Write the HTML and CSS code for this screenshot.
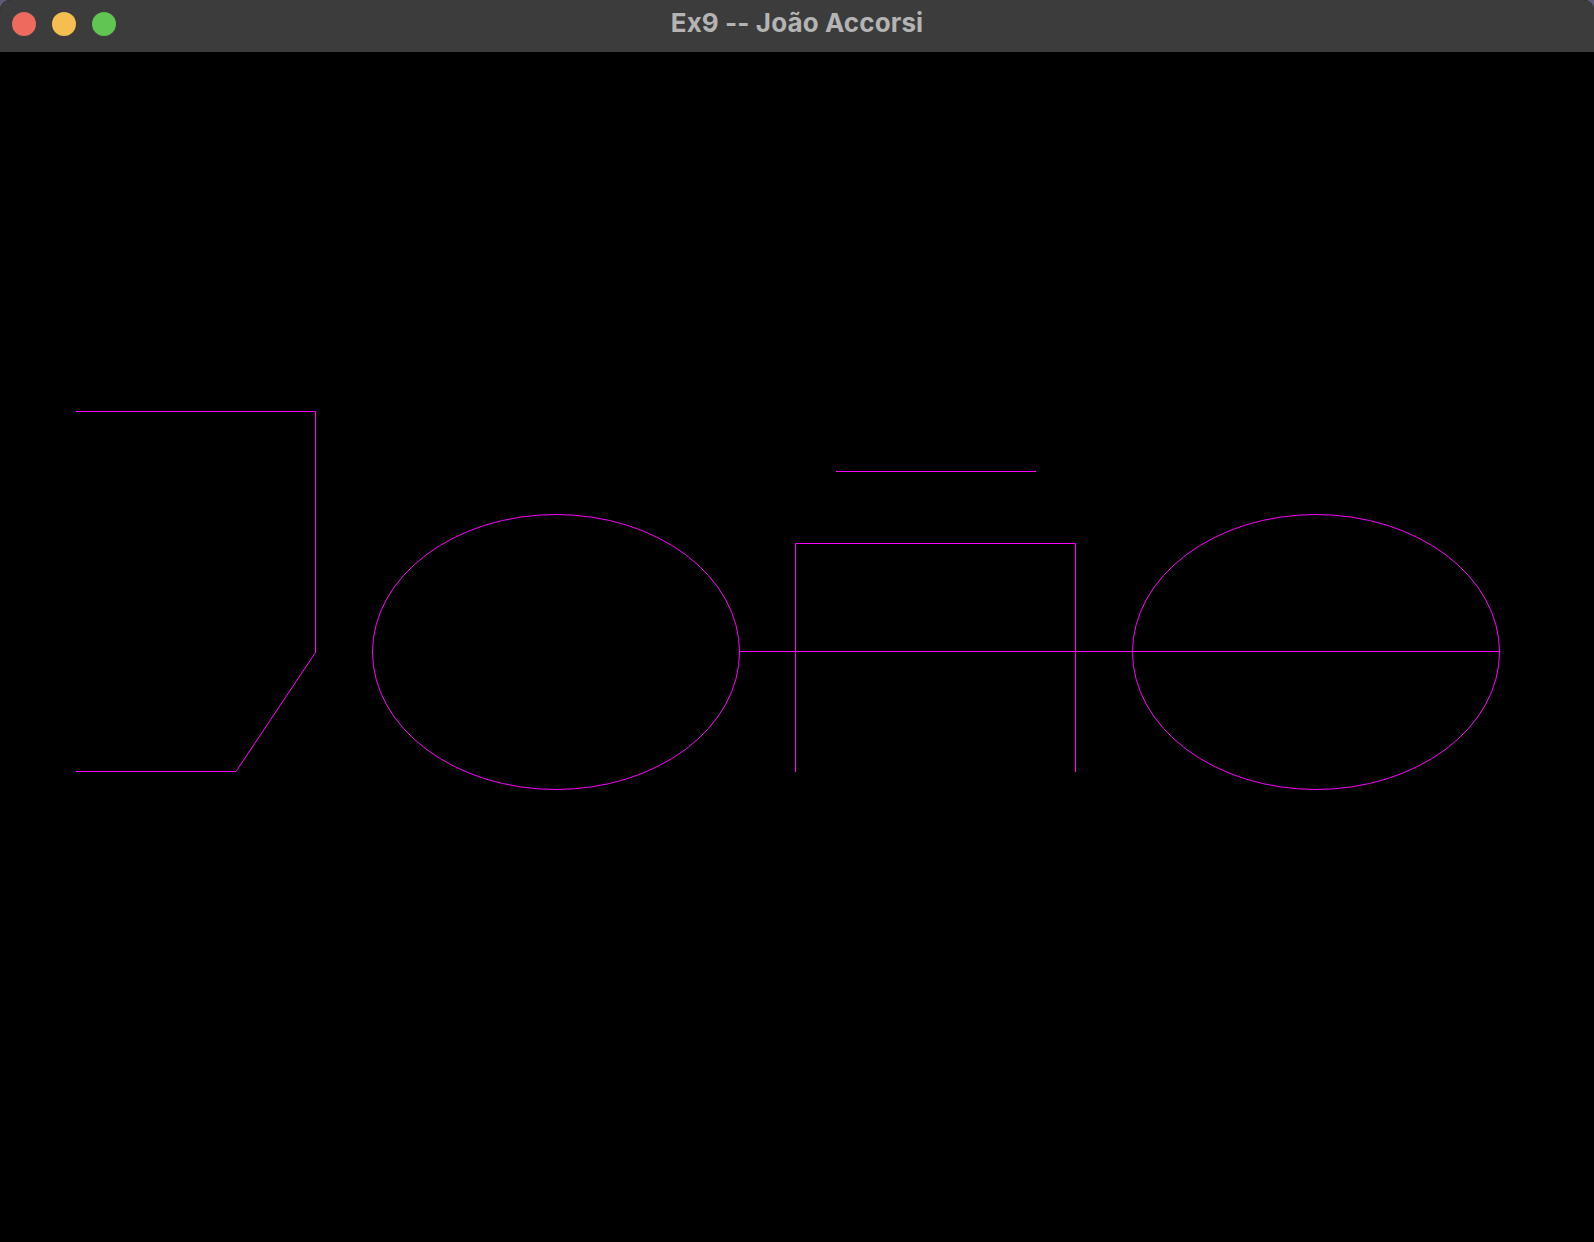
FILE: index.html
```html
<!DOCTYPE html>
<html lang="pt">
<head>
<meta charset="utf-8">
<title>Ex9 -- João Accorsi</title>
<link rel="stylesheet" href="styles.css">
</head>
<body>
<div class="window">
  <div class="titlebar">
    <div class="lights">
      <span class="light red"></span>
      <span class="light yellow"></span>
      <span class="light green"></span>
    </div>
    <div class="title">Ex9 -- João Accorsi</div>
    <div class="spacer"></div>
  </div>
  <div class="canvas">
    <svg class="drawing" width="1594" height="1190" viewBox="0 0 1594 1190" xmlns="http://www.w3.org/2000/svg">
      <g fill="none" stroke="#ff00ff" stroke-width="1">
        <polyline points="76,359.5 315.5,359.5 315.5,600.5 236,719.5 76,719.5"/>
        <ellipse cx="556" cy="600" rx="183.5" ry="137.5"/>
        <ellipse cx="1316" cy="600" rx="183.5" ry="137.5"/>
        <line x1="740" y1="599.5" x2="1500" y2="599.5"/>
        <line x1="836" y1="419.5" x2="1036" y2="419.5"/>
        <path d="M795.5 720 V491.5 H1075.5 V720"/>
      </g>
    </svg>
  </div>
</div>
</body>
</html>
```

FILE: styles.css
```css
html, body {
  margin: 0;
  padding: 0;
  background: #5d5b78;
}
body {
  width: 1594px;
  height: 1242px;
  overflow: hidden;
}
.window {
  width: 1594px;
  height: 1242px;
  border-radius: 10px 10px 0 0;
  overflow: hidden;
  background: #000;
  display: flex;
  flex-direction: column;
}
.titlebar {
  height: 52px;
  flex: 0 0 52px;
  background: #3c3c3c;
  display: grid;
  grid-template-columns: 1fr auto 1fr;
  align-items: center;
}
.lights {
  display: flex;
  gap: 16px;
  padding-left: 12px;
  padding-bottom: 4px;
}
.light {
  width: 24px;
  height: 24px;
  border-radius: 50%;
  display: block;
}
.red { background: #ed6a5e; }
.yellow { background: #f5bf4f; }
.green { background: #61c554; }
.title {
  font-family: Inter, "Liberation Sans", Arial, sans-serif;
  font-weight: 700;
  font-size: 26px;
  color: #b4b4b4;
  padding-bottom: 8px;
  letter-spacing: 0.1px;
}
.canvas {
  flex: 1 1 auto;
  background: #000;
}
.drawing {
  display: block;
}
```
